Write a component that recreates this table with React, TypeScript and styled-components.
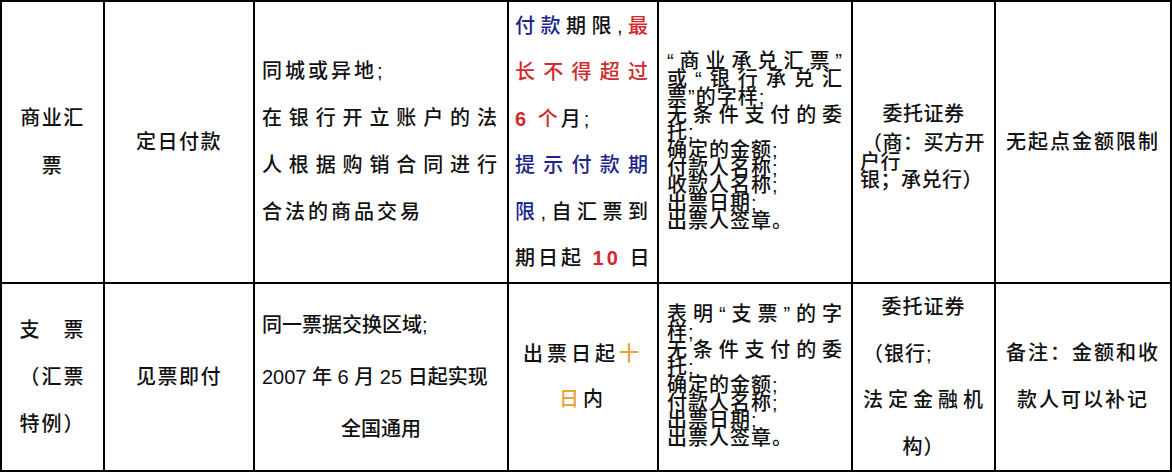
import { FC } from 'react';
import styled, { createGlobalStyle } from 'styled-components';

const GlobalStyle = createGlobalStyle`
  html, body {
    margin: 0;
    padding: 0;
    background: #fff;
  }
  body {
    font-family: "Liberation Sans", "Noto Sans CJK SC", sans-serif;
    font-weight: 500;
    color: #111;
  }
`;

const Table = styled.div`
  display: grid;
  grid-template-columns: 103px 150px 254px 150px 194px 143px 176px;
  grid-template-rows: 282px 188px;
  width: 1172px;
  height: 472px;
  box-sizing: border-box;
  border-top: 2px solid #000;
  border-left: 2px solid #000;
`;

export const Cell = styled.div<{
  $align?: 'left' | 'center';
  $lh?: number;
  $ls?: number;
  $px?: number;
}>`
  display: flex;
  flex-direction: column;
  justify-content: center;
  box-sizing: border-box;
  border-right: 2px solid #000;
  border-bottom: 2px solid #000;
  padding: 0 ${p => p.$px ?? 7}px;
  font-size: 20px;
  line-height: ${p => p.$lh ?? 47}px;
  letter-spacing: ${p => p.$ls ?? 1.5}px;
  text-align: ${p => p.$align ?? 'center'};
  white-space: nowrap;
  overflow: hidden;
`;

export const Line = styled.div<{ $justify?: boolean; $align?: string; $lh?: number }>`
  ${p => p.$justify && 'text-align: justify; text-align-last: justify; white-space: normal;'}
  ${p => p.$align && `text-align: ${p.$align};`}
  ${p => p.$lh && `line-height: ${p.$lh}px;`}
`;

const Blue = styled.span`
  color: #1c2688;
`;
const Red = styled.span`
  color: #d02a2c;
`;
const Digits = styled.span`
  font-weight: 700;
`;
const Orange = styled.span`
  color: #e8a236;
`;

const App: FC = () => {
  return (
    <>
      <GlobalStyle />
      <Table>
        {/* 商业汇票 */}
        <Cell $lh={48}>
          <Line>商业汇</Line>
          <Line>票</Line>
        </Cell>
        <Cell>定日付款</Cell>
        <Cell $align="left" $ls={3}>
          <Line>同城或异地;</Line>
          <Line $justify>在银行开立账户的法</Line>
          <Line $justify>人根据购销合同进行</Line>
          <Line>合法的商品交易</Line>
        </Cell>
        <Cell $align="left" $lh={46.5} $ls={3} $px={6}>
          <Line $justify>
            <Blue>付款</Blue>期限,<Red>最</Red>
          </Line>
          <Line $justify>
            <Red>长不得超过</Red>
          </Line>
          <Line>
            <Red>
              <Digits>6</Digits> 个
            </Red>
            月;
          </Line>
          <Line $justify>
            <Blue>提示付款期</Blue>
          </Line>
          <Line $justify>
            <Blue>限</Blue>,自汇票到
          </Line>
          <Line>
            期日起{' '}
            <Red>
              <Digits>10</Digits>
            </Red>{' '}
            日
          </Line>
        </Cell>
        <Cell $align="left" $lh={17.7} $ls={1} $px={8}>
          <Line $justify>“商业承兑汇票”</Line>
          <Line $justify>或“银行承兑汇</Line>
          <Line>票”的字样;</Line>
          <Line $justify>无条件支付的委</Line>
          <Line>托;</Line>
          <Line>确定的金额;</Line>
          <Line>付款人名称;</Line>
          <Line>收款人名称;</Line>
          <Line>出票日期;</Line>
          <Line>出票人签章。</Line>
        </Cell>
        <Cell $ls={0.5} $px={7}>
          <Line $lh={40}>委托证券</Line>
          <Line $lh={18.5}>（商：买方开</Line>
          <Line $lh={18.5} $align="left">
            户行
          </Line>
          <Line $lh={18.5} $align="left">
            银；承兑行）
          </Line>
        </Cell>
        <Cell $ls={2}>无起点金额限制</Cell>

        {/* 支票 */}
        <Cell $ls={2}>
          <Line>支　票</Line>
          <Line>（汇票</Line>
          <Line>特例）</Line>
        </Cell>
        <Cell>见票即付</Cell>
        <Cell $align="left" $lh={52} $ls={0}>
          <Line>同一票据交换区域;</Line>
          <Line>2007 年 6 月 25 日起实现</Line>
          <Line $align="center">全国通用</Line>
        </Cell>
        <Cell $lh={45} $ls={4}>
          <Line>
            出票日起<Orange>十</Orange>
          </Line>
          <Line>
            <Orange>日</Orange>内
          </Line>
        </Cell>
        <Cell $align="left" $lh={17.7} $ls={1} $px={8}>
          <Line $justify>表明“支票”的字</Line>
          <Line>样;</Line>
          <Line $justify>无条件支付的委</Line>
          <Line>托;</Line>
          <Line>确定的金额;</Line>
          <Line>付款人名称;</Line>
          <Line>出票日期;</Line>
          <Line>出票人签章。</Line>
        </Cell>
        <Cell $lh={46.5} $ls={1} $px={10}>
          <Line>委托证券</Line>
          <Line $align="left">（银行;</Line>
          <Line $justify>法定金融机</Line>
          <Line>构）</Line>
        </Cell>
        <Cell $ls={2}>
          <Line>备注：金额和收</Line>
          <Line>款人可以补记</Line>
        </Cell>
      </Table>
    </>
  );
};

export default App;
